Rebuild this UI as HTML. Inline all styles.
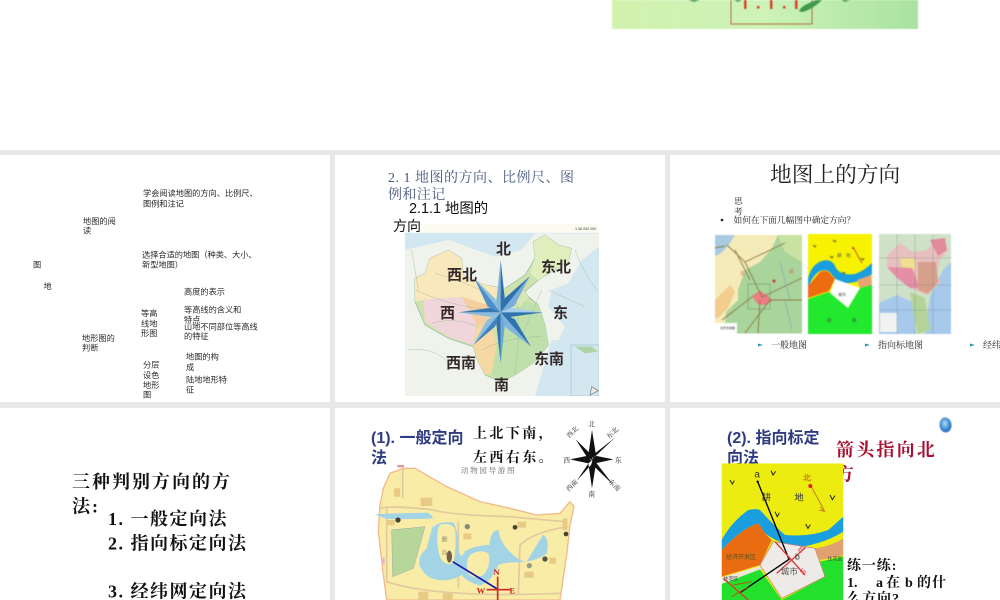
<!DOCTYPE html>
<html lang="zh"><head><meta charset="utf-8"><title>地图的方向</title>
<style>
html,body{margin:0;padding:0;background:#fff;width:1000px;height:600px;overflow:hidden}
svg{display:block;filter:blur(.35px)}
text{font-family:"Liberation Sans","Noto Sans CJK SC",sans-serif;fill:#222}
.s1 text{font-size:8.2px;fill:#2a2a2a}
.serif,.serif text{font-family:"Liberation Serif","Noto Serif CJK SC",serif}
.bl{filter:blur(.5px)}
.b2{filter:blur(1px)}
.lab text{font-size:15px;font-weight:700;fill:#33282a}
</style></head><body>
<svg width="1000" height="600" viewBox="0 0 1000 600" xmlns="http://www.w3.org/2000/svg">
<defs>
<linearGradient id="ban" x1="0" x2="1" y1="0" y2="0"><stop offset="0" stop-color="#d2f2ae"/><stop offset=".5" stop-color="#cdf3b8"/><stop offset="1" stop-color="#a9e2a2"/></linearGradient>
<radialGradient id="gl" cx=".45" cy=".4"><stop offset="0" stop-color="#b9dcf5"/><stop offset=".7" stop-color="#4a94d6"/><stop offset="1" stop-color="#2f78c0"/></radialGradient>
<clipPath id="c2"><rect x="210" y="248" width="582" height="490"/></clipPath>
<clipPath id="c5"><rect x="0" y="0" width="640" height="405"/></clipPath>
<clipPath id="c6"><rect x="20" y="10" width="365" height="410"/></clipPath>
</defs>
<rect width="1000" height="600" fill="#e8e8e8"/>
<rect width="1000" height="150" fill="#fff"/>
<rect x="0" y="155" width="330" height="247" fill="#fff"/>
<rect x="335" y="155" width="330" height="247" fill="#fff"/>
<rect x="670" y="155" width="330" height="247" fill="#fff"/>
<rect x="0" y="408" width="330" height="192" fill="#fff"/>
<rect x="335" y="408" width="330" height="192" fill="#fff"/>
<rect x="670" y="408" width="330" height="192" fill="#fff"/>

<!-- banner -->
<g class="bl">
<rect x="612" y="0" width="306" height="29" fill="url(#ban)"/>
<path d="M731 0V24H812V0" fill="none" stroke="#b0703f" stroke-width="1"/>
<g fill="#d8432a"><rect x="744" y="0" width="2.5" height="9"/><rect x="770" y="0" width="2.5" height="9"/><rect x="795" y="0" width="2.5" height="9"/><rect x="757" y="6" width="2.5" height="2.5"/><rect x="783" y="6" width="2.5" height="2.5"/></g>
<path d="M799 11C802 5 810 3 816 0H822C816 6 808 11 802 12Z" fill="#3f9a4a"/>
<path d="M688 0H700L694 2ZM734 0H742L738 2ZM841 0H850L845 2Z" fill="#4a9a50"/>
</g>

<!-- slide 1 -->
<g class="s1">
<text x="143" y="196">学会阅读地图的方向、比例尺、</text>
<text x="143" y="206.5">图例和注记</text>
<text x="83" y="224">地图的阅</text><text x="83" y="233.5">读</text>
<text x="142" y="257.5">选择合适的地图（种类、大小、</text>
<text x="142" y="267.5">新型地图）</text>
<text x="33" y="267.5">图</text><text x="43.5" y="289">地</text>
<text x="184" y="294.5">高度的表示</text>
<text x="184" y="312.5">等高线的含义和</text><text x="184" y="322.5">特点</text>
<text x="184" y="329.5">山地不同部位等高线</text><text x="184" y="339">的特征</text>
<text x="141" y="316">等高</text><text x="141" y="326.5">线地</text><text x="141" y="336">形图</text>
<text x="82" y="341">地形图的</text><text x="82" y="350.5">判断</text>
<text x="143" y="367.5">分层</text><text x="143" y="378">设色</text><text x="143" y="388">地形</text><text x="143" y="397.5">图</text>
<text x="186" y="359.5">地图的构</text><text x="186" y="370">成</text>
<text x="186" y="382.5">陆地地形特</text><text x="186" y="392.5">征</text>
</g>

<!-- slide 2 -->
<text class="serif" x="388" y="182" font-size="14" textLength="186" style="fill:#46587e">2. 1 地图的方向、比例尺、图</text>
<text class="serif" x="388" y="199" font-size="14" letter-spacing=".4" style="fill:#46587e">例和注记</text>
<text x="409" y="213" font-size="14.4" style="fill:#111">2.1.1 地图的</text>
<text x="393" y="231" font-size="14" style="fill:#111">方向</text>
<g transform="translate(335 150) scale(.33333)">
 <g class="b2">
 <rect x="260" y="222" width="532" height="26" fill="#fbfbf2"/>
 <g clip-path="url(#c2)">
  <rect x="210" y="248" width="582" height="490" fill="#d3e7f1"/>
  <path d="M210 300L340 270 480 320 560 300 600 250H792V290L740 330 700 400 650 420 640 470 690 530 670 570H650L600 738H210Z" fill="#f0f3ec"/>
  <path d="M240 385L270 370 285 325 340 300 380 325 385 375 450 405 510 415 570 375 600 325 595 275 630 255 670 285 710 295 700 335 650 365 610 390 570 425 580 440 610 465 630 525 640 585 600 635 540 675 500 695 450 675 425 625 415 590 340 565 270 525 240 455Z" fill="#cfe2ae" stroke="#8fb7a8" stroke-width="2"/>
  <path d="M240 385L270 370 285 325 340 300 380 325 385 375 450 405 510 415 490 440 460 465 380 440 265 450 240 455Z" fill="#f8e8bc"/>
  <path d="M265 450L380 440 425 515 415 585 340 560 270 515Z" fill="#f0d6da"/>
  <path d="M380 440L460 465 460 525 425 525Z" fill="#f5cf9f"/>
  <path d="M415 590L425 525 470 530 490 600 470 670 450 675 425 625Z" fill="#f5d8a4"/>
  <path d="M595 275L630 255 670 285 710 295 700 335 650 365 610 390 585 370 600 325Z" fill="#e0edbc"/>
  <path d="M490 560L560 450 610 465 630 525 640 585 600 635 540 675 500 695 470 670Z" fill="#bfe0aa"/>
  <path d="M520 430L570 425 580 440 555 470 510 480Z" fill="#d8e8b4"/>
  <path d="M708 585H792V738H708Z" fill="#d3e7f0" stroke="#a5c8c8" stroke-width="2"/>
  <path d="M720 590L770 590 790 605 750 610Z" fill="#aed4a6"/>
  <path d="M770 710L790 722 765 735Z" fill="#e8e8e8" stroke="#777" stroke-width="2"/>
  <path d="M240 420Q350 470 470 480M300 370Q420 400 500 460M440 600Q520 560 620 560M540 420Q560 540 540 670M620 420L560 560M220 600Q300 590 340 640M290 520Q360 500 430 530M230 300L250 420M640 420L750 470M720 300Q760 400 790 420" fill="none" stroke="#8fb39a" stroke-width="1.5" opacity=".7"/>
 </g>
 </g>
 <text x="720" y="240" font-size="11" style="fill:#444">1:36 000 000</text>
 <g class="bl">
  <path d="M497 330L497 487 483 462Z" fill="#7fb4de"/><path d="M497 330L497 487 511 462Z" fill="#2f72b0"/>
  <path d="M497 640L497 487 483 512Z" fill="#2f72b0"/><path d="M497 640L497 487 511 512Z" fill="#6fa8d8"/>
  <path d="M370 487L497 487 470 473Z" fill="#3579b6"/><path d="M370 487L497 487 470 501Z" fill="#8bbde2"/>
  <path d="M625 487L497 487 524 473Z" fill="#a6cdea"/><path d="M625 487L497 487 524 501Z" fill="#2f72b0"/>
  <path d="M418 385L497 487 458 470Z" fill="#4d90c8"/><path d="M418 385L497 487 478 444Z" fill="#8dbde0"/>
  <path d="M585 378L497 487 510 444Z" fill="#2f72b0"/><path d="M585 378L497 487 538 468Z" fill="#79aeda"/>
  <path d="M415 585L497 487 456 510Z" fill="#8dbde0"/><path d="M415 585L497 487 480 530Z" fill="#3e82bd"/>
  <path d="M588 590L497 487 512 532Z" fill="#7fb4de"/><path d="M588 590L497 487 540 508Z" fill="#2f72b0"/>
 </g>
 <g class="lab" transform="scale(3)">
  <text x="161" y="104">北</text>
  <text x="112" y="130">西北</text>
  <text x="206" y="122">东北</text>
  <text x="105" y="168">西</text>
  <text x="218" y="168">东</text>
  <text x="111" y="218">西南</text>
  <text x="199" y="214">东南</text>
  <text x="159" y="240">南</text>
 </g>
</g>

<!-- slide 3 -->
<text class="serif" x="770" y="182" font-size="21.7">地图上的方向</text>
<g class="serif" font-size="8.7">
<text x="734" y="204">思</text><text x="734" y="214.5">考</text>
<text x="733.5" y="223">如何在下面几幅图中确定方向？</text>
<circle cx="722" cy="220" r="1.3" fill="#222"/>
</g>
<g class="bl">
 <!-- map1 -->
 <rect x="715" y="235" width="87" height="98.5" fill="#a9d59c"/>
 <path d="M715 235H778L772 248 760 262 745 270 738 290 738 300 726 312 724 333H715Z" fill="#f5ebb8"/>
 <path d="M715 300L730 285 735 292 728 308 718 318 715 318Z" fill="#f2cd8e"/>
 <path d="M715 235H735L728 246 720 254 715 256Z" fill="#a8cbe0"/>
 <path d="M778 235H802V262L785 252Z" fill="#c9e2a2"/>
 <path d="M752 296L760 291 768 296 772 301 765 305 758 304Z" fill="#ef7d88" stroke="#c85" stroke-width=".4"/>
 <path d="M727 245L745 262 762 297 802 278M735 250L750 280M802 300L770 300 745 333M760 300L758 333M785 243L745 262M715 248L725 246M722 320L752 297" fill="none" stroke="#8a7a45" stroke-width=".9"/>
 <rect x="748" y="284" width="22" height="25" fill="none" stroke="#6a8a60" stroke-width=".5"/>
 <path d="M780 262L790 300M785 300L792 330" fill="none" stroke="#7fb0b8" stroke-width=".8"/>
 <rect x="715" y="323" width="22" height="10.5" fill="#fff"/>
 <text x="720" y="329" font-size="3" style="fill:#333">北京市地图</text>
 <circle cx="774" cy="281" r="1.5" fill="#c33"/>
 <text x="740" y="275" font-size="5" style="fill:#c96a50">北</text><text x="789" y="273" font-size="5" style="fill:#c96a50">省</text>
 <!-- map2 -->
 <rect x="808" y="234" width="64" height="100" fill="#f6f200"/>
 <path d="M808 278Q812 264 822 261 832 258 836 268 841 276 855 274 864 271 872 263V274Q862 282 848 283 838 283 832 275 828 268 820 271 812 276 808 288Z" fill="#1a9ee0"/>
 <path d="M808 286L820 272Q827 268 832 276L835 279 829 291 808 298Z" fill="#ee6c10"/>
 <path d="M857 280L871 275 872 285 860 288Z" fill="#e8a474"/>
 <path d="M808 299L829 292 848 308 860 288 872 285V334H808Z" fill="#22e82e"/>
 <path d="M835 279L860 288 848 308 830 293Z" fill="#fff"/>
 <path d="M853 247L862 263" stroke="#c33" stroke-width=".8"/><circle cx="853" cy="248" r="1" fill="#d22"/>
 <path d="M813 245l2 2 1-2M833 240l2 2 1-2M861 258l2 2 1-2M842 272l2 2 1-2M830 256l2 2 1-2" stroke="#333" stroke-width=".7" fill="none"/>
 <text x="837" y="257" font-size="4.5" style="fill:#555">耕</text><text x="846" y="257" font-size="4.5" style="fill:#555">地</text>
 <text x="838" y="296" font-size="4" style="fill:#444">城市</text>
 <text x="827" y="322" font-size="4.5" style="fill:#444">树</text><text x="852" y="322" font-size="4.5" style="fill:#444">林</text>
 <!-- map3 -->
 <rect x="879" y="234" width="72" height="100" fill="#cfe2c8"/>
 <path d="M879 303L897 295 912 302 916 334H879ZM930 296L943 270 951 262V334H925Z" fill="#a6c9ec"/>
 <path d="M910 292L925 298 930 330 918 334 913 312Z" fill="#b4d49a"/>
 <path d="M887 255L900 243 913 252 927 250 937 238 948 250 940 260 937 273 940 283 927 295 910 288 897 278 887 267Z" fill="#e8c0bf"/>
 <path d="M900 258L914 258 916 270 903 272Z" fill="#eee08e"/>
 <path d="M887 267L912 268 920 288 910 288 897 278Z" fill="#e58fa6"/>
 <path d="M918 262L936 262 938 282 928 294 918 290Z" fill="#d7a08c"/>
 <path d="M930 240L945 238 947 250 938 256Z" fill="#e38a9c"/>
 <rect x="880" y="313" width="17" height="19" fill="#f2f2f2"/>
 <path d="M879 258H951M879 285H951M879 310H951M897 234V334M915 234V334M933 234V334" stroke="#6a7f88" stroke-width=".3" fill="none"/>
</g>
<g class="serif" font-size="9">
<path d="M758 343.5L763 345 758 346.5Z" fill="#2a9aa8"/><text x="771" y="348">一般地图</text>
<path d="M865 343.5L870 345 865 346.5Z" fill="#2a9aa8"/><text x="878" y="348">指向标地图</text>
<path d="M970 343.5L975 345 970 346.5Z" fill="#2a9aa8"/><text x="983" y="348">经纬网地图</text>
</g>

<!-- slide 4 -->
<g class="serif" font-size="18" font-weight="700" style="letter-spacing:2px">
<text x="72" y="488" style="fill:#111">三种判别方向的方</text>
<text x="72" y="512.5" style="fill:#111">法:</text>
<text x="108" y="525" style="fill:#111;letter-spacing:1.5px">1. 一般定向法</text>
<text x="108" y="549.5" style="fill:#111;letter-spacing:1.5px">2. 指向标定向法</text>
<text x="108" y="597.5" style="fill:#111;letter-spacing:1.5px">3. 经纬网定向法</text>
</g>

<!-- slide 5 -->
<text x="371" y="443" font-size="16" font-weight="700" style="fill:#2f3b82">(1). 一般定向</text>
<text x="371" y="463" font-size="16" font-weight="700" style="fill:#2f3b82">法</text>
<g class="serif" font-size="14" font-weight="700" style="letter-spacing:2.4px">
<text x="473" y="438" style="fill:#111">上北下南，</text>
<text x="473" y="462" style="fill:#111">左西右东。</text>
</g>
<text class="serif" x="461" y="473" font-size="7.5" letter-spacing="1.7" style="fill:#666">动物园导游图</text>
<g transform="translate(335 405) scale(.33333)">
 <g class="bl">
  <path d="M771 75L783 150 771 165 760 150ZM771 250L783 175 771 160 760 175ZM705 163L760 152 775 163 760 175ZM835 163L780 152 765 163 780 175ZM722 103L770 150 772 165 755 155ZM840 98L785 150 770 165 780 145ZM725 228L765 168 775 160 768 180ZM835 240L785 175 770 160 778 185Z" fill="#111"/>
 </g>
 <g class="serif" font-size="20" style="fill:#555">
  <text x="760" y="65">北</text><text x="760" y="275">南</text><text x="685" y="172">西</text><text x="840" y="172">东</text>
  <text x="695" y="95" transform="rotate(-45 705 88)">西北</text><text x="815" y="98" transform="rotate(-45 825 90)">东北</text>
  <text x="695" y="255" transform="rotate(-45 705 250)">西南</text><text x="815" y="238" transform="rotate(45 825 240)">东南</text>
 </g>
</g>
<g transform="translate(370 465) scale(.33333)" clip-path="url(#c5)">
 <g class="bl">
  <path d="M40 70L60 25 100 10 135 10 230 65 330 110 420 130 500 150 570 145 600 110 612 125 600 180 590 270 570 405H50L40 330 25 200 30 120Z" fill="#f9eca6" stroke="#f2b98c" stroke-width="4"/>
  <path d="M98 10V100M30 130Q60 120 190 135 240 150 420 155 520 165 590 170M50 130V350Q200 400 570 385M265 170V370M450 240Q490 200 595 185M450 240L445 385" fill="none" stroke="#e2c9a0" stroke-width="5"/>
  <path d="M65 195L165 185 130 310 68 335Z" fill="#b7d69a" stroke="#9aa" stroke-width="1.5"/>
  <path d="M14 148L50 146 170 143Q192 148 190 175 180 210 170 250 145 270 148 300 165 340 205 345 240 350 275 330 290 350 330 362 365 350 385 300 400 292 440 292 500 290 530 265 540 225 520 208 500 240 470 290 445 290 410 250 390 228 385 195 362 195 358 240 320 240 285 258 272 290 265 250 265 195 250 172 200 168 190 190 188 215 190 160 170 162 50 162 14 162Z" fill="#a3d4e6"/>
  <path d="M208 180Q245 170 256 195 260 250 250 295 220 305 208 270 195 220 208 180Z" fill="#f9eca6"/>
  <path d="M300 270Q330 250 355 265 365 300 340 330 310 345 295 325 285 290 300 270Z" fill="#f9eca6"/>
  <rect x="152" y="98" width="35" height="25" fill="#e9ca84"/><rect x="280" y="205" width="24" height="18" fill="#e9ca84"/><rect x="442" y="170" width="26" height="18" fill="#e9ca84"/><rect x="463" y="320" width="28" height="18" fill="#e9ca84"/><rect x="538" y="278" width="20" height="18" fill="#e9ca84"/><rect x="578" y="160" width="14" height="35" fill="#e9ca84"/><rect x="145" y="380" width="30" height="25" fill="#e9ca84"/><rect x="218" y="385" width="30" height="20" fill="#e9ca84"/><rect x="72" y="70" width="18" height="25" fill="#e9ca84"/><rect x="52" y="165" width="22" height="16" fill="#e9ca84"/>
  <ellipse cx="238" cy="275" rx="8" ry="18" fill="#6e6048"/><circle cx="84" cy="165" r="8" fill="#443"/><circle cx="435" cy="187" r="7" fill="#443"/><circle cx="525" cy="282" r="8" fill="#554"/><circle cx="292" cy="185" r="8" fill="#887"/><circle cx="588" cy="207" r="7" fill="#443"/><circle cx="478" cy="302" r="8" fill="#998"/>
  <rect x="36" y="278" width="8" height="22" fill="#f0b8b8"/><rect x="82" y="0" width="20" height="7" fill="#e89090"/>
  <path d="M248 290L382 372" stroke="#1a1aa0" stroke-width="5"/>
  <path d="M383 335V405M350 374H420" stroke="#cf2a20" stroke-width="5"/>
 </g>
 <g class="serif" font-size="17" style="fill:#776">
  <text x="215" y="230" font-size="18" style="fill:#665">猴</text><text x="215" y="268" style="fill:#665">岛</text>
 </g>
 <g class="serif" font-weight="700" font-size="26">
  <text x="370" y="330" style="fill:#c8201c">N</text><text x="320" y="386" style="fill:#c8201c">W</text><text x="418" y="386" style="fill:#c8201c">E</text>
 </g>
</g>

<!-- slide 6 -->
<path d="M945 417.5C949 417.5 951.5 421 951.5 425.5 951.5 429.5 949 432.5 945.5 432.5 941.5 432 939.5 428.5 939.5 424.5 939.5 420.5 942 417.5 945 417.5Z" fill="url(#gl)" class="bl"/>
<text x="727" y="443" font-size="16" font-weight="700" style="fill:#2f3b82">(2). 指向标定</text>
<text x="727" y="463" font-size="16" font-weight="700" style="fill:#2f3b82">向法</text>
<g class="serif" font-size="18" font-weight="700" style="letter-spacing:2.2px">
<text x="836" y="456" style="fill:#a81030">箭头指向北</text>
<text x="836" y="480.5" style="fill:#a81030">方</text>
</g>
<g transform="translate(715 460) scale(.33333)" clip-path="url(#c6)">
 <g class="bl">
  <rect x="20" y="10" width="365" height="410" fill="#ecec10"/>
  <path d="M20 240Q50 185 100 150 125 145 135 150 170 190 210 225 280 232 340 210L385 170V215Q330 250 250 262 190 250 150 220L130 190Q80 205 20 270Z" fill="#1a9ee0"/>
  <path d="M20 270Q80 205 130 190L150 220 170 240 135 315 20 350Z" fill="#e96c10"/>
  <path d="M385 235V285L315 300 300 265Q350 258 385 235Z" fill="#e0a070"/>
  <path d="M20 352L135 318 140 330 20 372Z" fill="#f2e6d8"/>
  <path d="M20 372L135 328 200 420H20ZM200 420L330 350 315 305 385 290V420Z" fill="#22e02c"/>
  <path d="M135 315L175 245 300 265 330 350 200 415Z" fill="#eeeae8" stroke="#c87868" stroke-width="2"/>
  <path d="M128 65L222 298 75 398" fill="none" stroke="#000" stroke-width="4"/>
  <circle cx="128" cy="65" r="3.5" fill="#000"/>
  <path d="M180 245L270 345M272 262L185 340M25 355L100 420" stroke="#d83a3a" stroke-width="4" fill="none"/>
  <path d="M55 375L110 365M50 410L100 380" stroke="#b0561a" stroke-width="3" fill="none"/>
  <path d="M288 78L328 152M316 142L328 154 312 150" stroke="#c8802a" stroke-width="3" fill="none"/>
  <circle cx="286" cy="78" r="6" fill="#e02020"/>
  <path d="M45 60l7 12 6-10M168 32l6 13 8-11M345 105l7 14 8-12M180 155l7 15 6-12M272 192l7 13 7-11" stroke="#222" stroke-width="3" fill="none"/>
 </g>
 <g style="filter:blur(.3px)">
 <text x="118" y="52" font-size="30" style="fill:#333">a</text>
 <text x="240" y="298" font-size="26" style="fill:#333">b</text>
 <text x="264" y="62" font-size="24" style="fill:#b8402a">北</text>
 <text x="140" y="122" font-size="28" style="fill:#333">耕</text>
 <text x="238" y="122" font-size="28" style="fill:#333">地</text>
 <text x="33" y="297" font-size="18" style="fill:#552">经济开发区</text>
 <text x="197" y="343" font-size="26" style="fill:#555">城市</text>
 <text x="250" y="278" font-size="24" transform="rotate(40 260 270)" style="fill:#d84040">E</text>
 <text x="255" y="345" font-size="24" transform="rotate(-40 260 335)" style="fill:#d84040">S</text>
 <text x="338" y="302" font-size="15" style="fill:#444">住宅区</text>
 <text x="25" y="362" font-size="15" style="fill:#444">住宅区</text>
 </g>
</g>
<g class="serif" font-size="14" font-weight="700">
<text x="847" y="570" style="fill:#111;letter-spacing:.9px">练一练:</text>
<text x="847" y="587" style="fill:#111">1.</text>
<text x="876" y="587" style="fill:#111">a</text>
<text x="886" y="587" style="fill:#111">在</text>
<text x="905" y="587" style="fill:#111">b</text>
<text x="917" y="587" style="fill:#111">的</text>
<text x="932" y="587" style="fill:#111">什</text>
<text x="847" y="603" style="fill:#111;letter-spacing:1px">么方向?</text>
</g>
</svg>
</body></html>
